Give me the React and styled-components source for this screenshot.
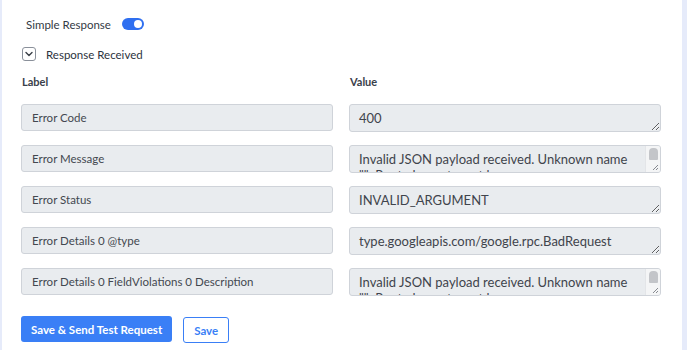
import React, { useState } from "react";
import styled, { createGlobalStyle } from "styled-components";

const GlobalStyle = createGlobalStyle`
    html, body {
        margin: 0;
        padding: 0;
        background: #e6ebfa;
        font-family: Lato, "Open Sans", sans-serif;
    }
`;

const Panel = styled.div`
    margin: 0 5px 0 2px;
    height: 350px;
    background: #ffffff;
    padding: 16px 19px 0 19px;
    box-sizing: border-box;
    overflow: hidden;
`;

const ToggleRow = styled.div`
    display: flex;
    align-items: center;
    gap: 11px;
    height: 16px;
    padding-left: 5px;
    font-size: 11.5px;
    color: #333a44;
`;

const Switch = styled.button`
    width: 22px;
    height: 12px;
    border: none;
    border-radius: 6px;
    padding: 0;
    background: ${(p) => (p.on ? "#2f6ff0" : "#c5cad3")};
    position: relative;
    cursor: pointer;

    &::after {
        content: "";
        position: absolute;
        top: 2px;
        left: ${(p) => (p.on ? "12px" : "2px")};
        width: 8px;
        height: 8px;
        border-radius: 50%;
        background: #ffffff;
    }
`;

const CollapseRow = styled.div`
    display: flex;
    align-items: center;
    gap: 10px;
    margin-top: 15px;
    font-size: 11.5px;
    color: #2c3340;
`;

const ChevronBox = styled.span`
    width: 12px;
    height: 12px;
    border: 1px solid #8a909a;
    border-radius: 3px;
    display: flex;
    align-items: center;
    justify-content: center;
    margin-left: 1px;
`;

const Grid = styled.div`
    display: grid;
    grid-template-columns: 312px 312px;
    column-gap: 16px;
    row-gap: 13px;
    margin-top: 14px;
`;

const Heading = styled.div`
    font-size: 11px;
    font-weight: 700;
    color: #3a404a;
    margin-left: 1px;
    margin-bottom: 3px;
`;

const LabelBox = styled.input`
    box-sizing: border-box;
    width: 100%;
    height: 27px;
    background: #e9ecef;
    border: 1px solid #cfd3d9;
    border-radius: 3px;
    padding: 0 10px;
    font-family: Lato, sans-serif;
    font-size: 11.5px;
    color: #43484f;
    outline: none;
`;

const ValueField = styled.div`
    position: relative;
    height: 28px;
`;

const ValueBox = styled.textarea`
    display: block;
    box-sizing: border-box;
    width: 100%;
    height: 28px;
    background: #e9ecef;
    border: 1px solid #cfd3d9;
    border-radius: 3px;
    padding: 5px ${(p) => (p.scroll ? "24px" : "9px")} 5px 9px;
    font-family: Lato, sans-serif;
    font-size: 13px;
    line-height: 16px;
    color: #3f444c;
    outline: none;
    overflow: hidden;
    resize: ${(p) => (p.scroll ? "none" : "vertical")};
`;

/* fake scrollbar rail laid over the right edge of a scrolling textarea */
const Rail = styled.div`
    position: absolute;
    top: 1px;
    right: 1px;
    bottom: 1px;
    width: 14px;
    background: #f4f5f6;
    border-left: 1px solid #e3e5e8;
    border-radius: 0 2px 2px 0;
    display: flex;
    flex-direction: column;
    align-items: center;
`;

const Thumb = styled.div`
    width: 9px;
    height: 12px;
    margin-top: 2px;
    border-radius: 4px 4px 1px 1px;
    background: #c3c5c9;
`;

const Grip = styled.svg`
    margin-top: auto;
    margin-left: auto;
    margin-right: 1px;
    margin-bottom: 1px;
`;

const Actions = styled.div`
    display: flex;
    gap: 11px;
    margin-top: 20px;
`;

const PrimaryButton = styled.button`
    height: 26px;
    padding: 0 10px;
    border: none;
    border-radius: 3px;
    background: #3a7ff6;
    color: #ffffff;
    font-family: Lato, sans-serif;
    font-size: 11.5px;
    font-weight: 700;
`;

const OutlineButton = styled.button`
    height: 26px;
    margin-top: 1px;
    padding: 0 10px;
    border: 1px solid #3a7ff6;
    border-radius: 3px;
    background: #ffffff;
    color: #3a7ff6;
    font-family: Lato, sans-serif;
    font-size: 11.5px;
    font-weight: 700;
`;

const message =
    'Invalid JSON payload received. Unknown name "": Root element must be a message.';

const rows = [
    { label: "Error Code", value: "400" },
    { label: "Error Message", value: message, scroll: true },
    { label: "Error Status", value: "INVALID_ARGUMENT" },
    { label: "Error Details 0 @type", value: "type.googleapis.com/google.rpc.BadRequest" },
    { label: "Error Details 0 FieldViolations 0 Description", value: message, scroll: true },
];

export default function App() {
    const [simple, setSimple] = useState(true);

    return (
        <>
            <GlobalStyle />
            <Panel>
                <ToggleRow>
                    Simple Response
                    <Switch on={simple ? 1 : 0} onClick={() => setSimple(!simple)} />
                </ToggleRow>
                <CollapseRow>
                    <ChevronBox>
                        <svg width="8" height="6" viewBox="0 0 8 6">
                            <path d="M1 1.5 L4 4.5 L7 1.5" fill="none" stroke="#3a3f47" strokeWidth="1.4" strokeLinecap="round" strokeLinejoin="round" />
                        </svg>
                    </ChevronBox>
                    Response Received
                </CollapseRow>
                <Grid>
                    <Heading>Label</Heading>
                    <Heading>Value</Heading>
                    {rows.map((row) => (
                        <React.Fragment key={row.label}>
                            <LabelBox readOnly value={row.label} />
                            <ValueField>
                                <ValueBox readOnly value={row.value} scroll={row.scroll ? 1 : 0} />
                                {row.scroll && (
                                    <Rail>
                                        <Thumb />
                                        <Grip width="8" height="8" viewBox="0 0 8 8">
                                            <path d="M7 2 L2 7 M7 5 L5 7" stroke="#7a7e85" strokeWidth="0.9" />
                                        </Grip>
                                    </Rail>
                                )}
                            </ValueField>
                        </React.Fragment>
                    ))}
                </Grid>
                <Actions>
                    <PrimaryButton>Save &amp; Send Test Request</PrimaryButton>
                    <OutlineButton>Save</OutlineButton>
                </Actions>
            </Panel>
        </>
    );
}
